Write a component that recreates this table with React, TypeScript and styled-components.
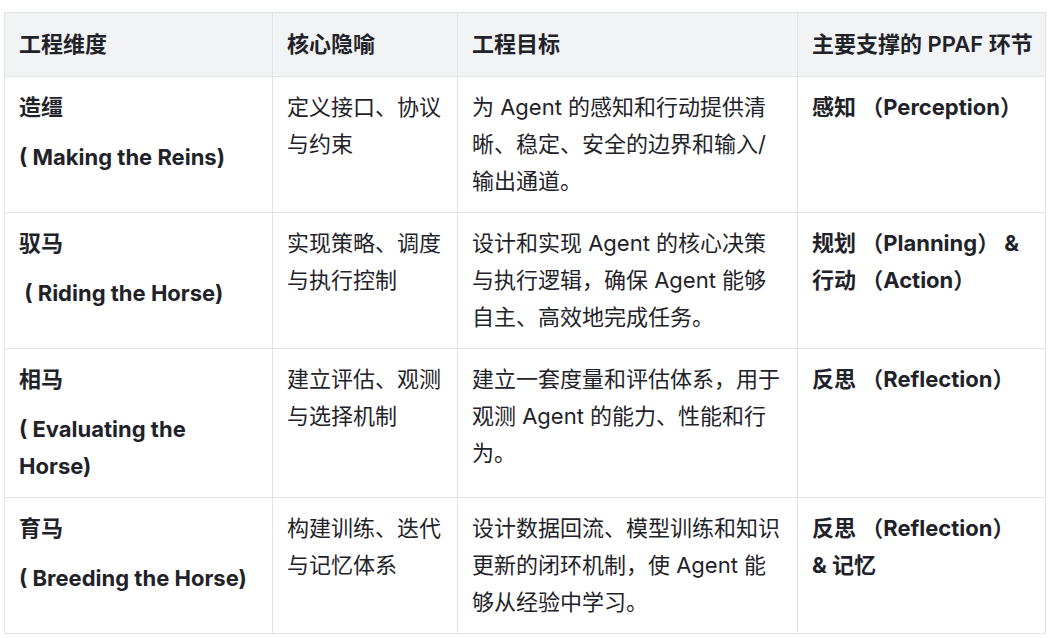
import styled, { createGlobalStyle } from "styled-components";

interface IRow {
  term: string;
  gloss: string;
  metaphor: string;
  goal: string;
  stage: string[];
}

const rows: IRow[] = [
  {
    term: "造缰",
    gloss: "( Making the Reins)",
    metaphor: "定义接口、协议与约束",
    goal: "为 Agent 的感知和行动提供清晰、稳定、安全的边界和输入/输出通道。",
    stage: ["感知 （Perception）"],
  },
  {
    term: "驭马",
    gloss: "\u00a0( Riding the Horse)",
    metaphor: "实现策略、调度与执行控制",
    goal: "设计和实现 Agent 的核心决策与执行逻辑，确保 Agent 能够自主、高效地完成任务。",
    stage: ["规划 （Planning） &", "行动 （Action）"],
  },
  {
    term: "相马",
    gloss: "( Evaluating the Horse)",
    metaphor: "建立评估、观测与选择机制",
    goal: "建立一套度量和评估体系，用于观测 Agent 的能力、性能和行为。",
    stage: ["反思 （Reflection）"],
  },
  {
    term: "育马",
    gloss: "( Breeding the Horse)",
    metaphor: "构建训练、迭代与记忆体系",
    goal: "设计数据回流、模型训练和知识更新的闭环机制，使 Agent 能够从经验中学习。",
    stage: ["反思 （Reflection）", "& 记忆"],
  },
];

const columns = [
  { title: "工程维度", width: 268 },
  { title: "核心隐喻", width: 185 },
  { title: "工程目标", width: 340 },
  { title: "主要支撑的 PPAF 环节", width: 248 },
];

export default function App() {
  return (
    <Page>
      <GlobalStyle />
      <Table>
        <colgroup>
          {columns.map((c) => (
            <col key={c.title} style={{ width: c.width }} />
          ))}
        </colgroup>
        <thead>
          <tr>
            {columns.map((c) => (
              <Th key={c.title}>{c.title}</Th>
            ))}
          </tr>
        </thead>
        <tbody>
          {rows.map((r) => (
            <tr key={r.term}>
              <Td>
                <Term>{r.term}</Term>
                <Gloss>{r.gloss}</Gloss>
              </Td>
              <Td>{r.metaphor}</Td>
              <Td>{r.goal}</Td>
              <Td>
                {r.stage.map((s) => (
                  <Stage key={s}>{s}</Stage>
                ))}
              </Td>
            </tr>
          ))}
        </tbody>
      </Table>
    </Page>
  );
}

const GlobalStyle = createGlobalStyle`
  body {
    margin: 0;
    background: #ffffff;
    font-family: Inter, "Noto Sans CJK SC", sans-serif;
    color: #1f2329;
  }
`;

const Page = styled.div`
  padding: 12px 0 0 4px;
`;

const Table = styled.table`
  border-collapse: collapse;
  table-layout: fixed;
  width: 1042px;
  font-size: 22px;
  line-height: 37px;
`;

const Th = styled.th`
  background: #f2f3f5;
  border: 1px solid #e1e3e7;
  padding: 13px 8px 13px 14px;
  text-align: left;
  font-weight: 600;
  white-space: nowrap;
  overflow: hidden;
`;

const Td = styled.td`
  border: 1px solid #e1e3e7;
  padding: 12px 14px;
  vertical-align: top;
  font-weight: 400;
`;

const Term = styled.div`
  font-weight: 700;
`;

const Gloss = styled.div`
  font-weight: 700;
  margin-top: 13px;
`;

const Stage = styled.div`
  font-weight: 700;
`;
